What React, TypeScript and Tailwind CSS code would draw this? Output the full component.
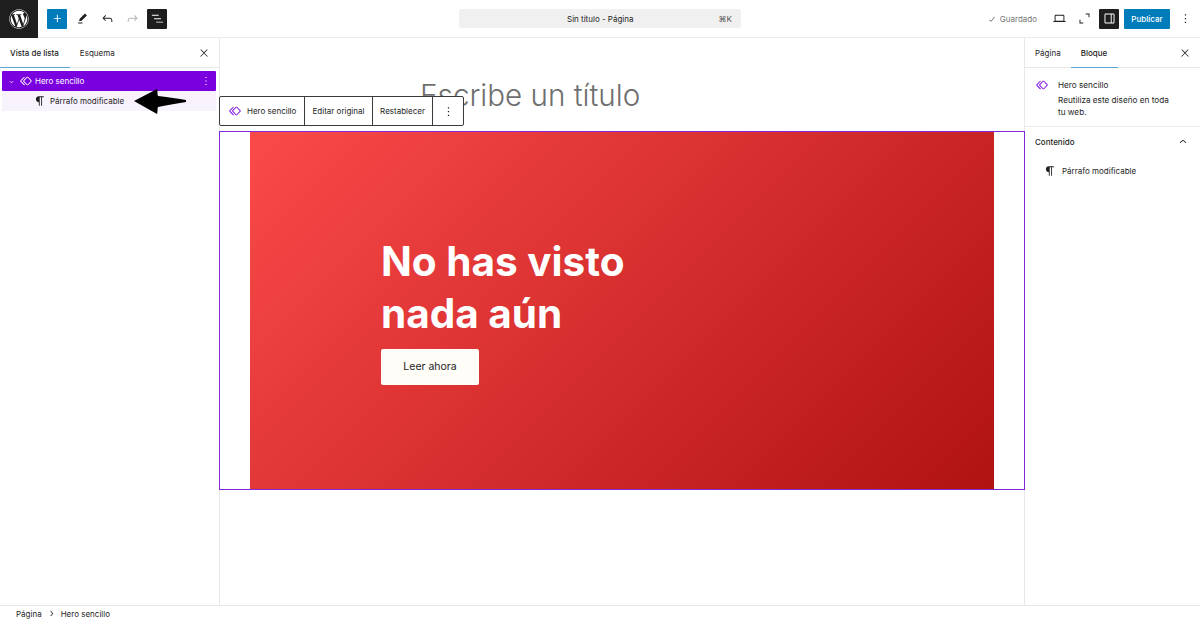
import React from "react";
import { FaWordpress } from "react-icons/fa";

const P = {
  plus: "M11 12.5V17.5H12.5V12.5H17.5V11H12.5V6H11V11H6V12.5H11Z",
  pencil: "m19 7-3-3-8.5 8.5-1 4 4-1L19 7Zm-7 11.5H5V20h7v-1.5Z",
  undo: "M18.3 11.7c-.6-.6-1.4-.9-2.3-.9H6.7l2.9-3.3-1.1-1-4.5 5L8.5 16l1-1-2.7-2.7H16c.5 0 .9.2 1.3.5 1 1 1 3.4 1 4.5v.3h1.5v-.2c0-1.5 0-4.3-1.5-5.7z",
  redo: "M15.6 6.5l-1.1 1 2.9 3.3H8c-.9 0-1.7.3-2.3.9-1.4 1.5-1.4 4.2-1.4 5.6v.2h1.5v-.3c0-1.1 0-3.5 1-4.5.3-.3.7-.5 1.3-.5h9.2L14.5 15l1.1 1.1 4.6-4.6-4.6-5z",
  list: "M3 6h11v1.5H3V6Zm3.5 5.5h11V13h-11v-1.5ZM21 17H10v1.5h11V17Z",
  close: "M13 11.8l6.1-6.3-1-1-6.1 6.2-6.1-6.2-1 1 6.1 6.3-6.5 6.7 1 1 6.5-6.6 6.5 6.6 1-1z",
  more: "M13 19h-2v-2h2v2zm0-6h-2v-2h2v2zm0-6h-2V5h2v2z",
  up: "M6.5 12.4L12 8l5.5 4.4-.9 1.2L12 10l-4.5 3.6-1-1.2z",
  down: "M17.5 11.6L12 16l-5.5-4.4.9-1.2L12 14l4.5-3.6 1 1.2z",
  right: "M10.6 6L9.4 7l4.6 5-4.6 5 1.2 1 5.4-6z",
  para: "m9.99609 14v-.2251l.00391.0001v6.225h1.5v-14.5h2.5v14.5h1.5v-14.5h3v-1.5h-8.50391c-2.76142 0-5 2.23858-5 5 0 2.7614 2.23858 5 5 5z",
  symbol: "M21.3 10.8l-5.6-5.6c-.7-.7-1.8-.7-2.5 0l-5.6 5.6c-.7.7-.7 1.8 0 2.5l5.6 5.6c.3.3.8.5 1.2.5s.9-.2 1.2-.5l5.6-5.6c.8-.7.8-1.9.1-2.5zm-1 1.4l-5.6 5.6c-.1.1-.3.1-.4 0l-5.6-5.6c-.1-.1-.1-.3 0-.4l5.6-5.6s.1-.1.2-.1.1 0 .2.1l5.6 5.6c.1.1.1.3 0 .4zm-16.6-.4L10 5.5l-1-1-6.3 6.3c-.7.7-.7 1.8 0 2.5L9 19.5l1.1-1.1-6.3-6.3c-.2 0-.2-.2-.1-.3z",
  laptop: "M20.5 16h-.7V8c0-1.1-.9-2-2-2H6.2c-1.1 0-2 .9-2 2v8h-.7c-.8 0-1.5.7-1.5 1.5h20c0-.8-.7-1.5-1.5-1.5zM5.7 8c0-.3.2-.5.5-.5h11.6c.3 0 .5.2.5.5v7.6H5.7V8z",
  corners: "M10 18.5H5.5V14H4v6h6v-1.5ZM14 4v1.5h4.5V10H20V4h-6Z",
  drawer: "M18 4H6c-1.1 0-2 .9-2 2v12c0 1.1.9 2 2 2h12c1.1 0 2-.9 2-2V6c0-1.1-.9-2-2-2zm-4 14.5H6c-.3 0-.5-.2-.5-.5V6c0-.3.2-.5.5-.5h8v13zm4.5-.5c0 .3-.2.5-.5.5h-2.5v-13H18c.3 0 .5.2.5.5v12z",
  check: "M16.7 7.1l-6.3 8.5-3.3-2.5-.9 1.2 4.5 3.4L17.9 8z",
};

function I({ d, className }: { d: string; className: string }) {
  return (
    <svg viewBox="0 0 24 24" className={className} fill="currentColor" aria-hidden="true">
      <path d={d} />
    </svg>
  );
}

function Header() {
  return (
    <header className="flex h-[38px] shrink-0 items-center border-b border-[#ececec] bg-white">
      <div className="flex h-[38px] w-[38px] shrink-0 items-center justify-center bg-[#1e1e1e] text-white">
        <FaWordpress className="h-[20px] w-[20px]" />
      </div>
      <div className="ml-[9px] flex h-[20px] w-[20px] items-center justify-center rounded-[1px] bg-[#007cba] text-white">
        <I d={P.plus} className="h-[15px] w-[15px]" />
      </div>
      <I d={P.pencil} className="ml-[7.5px] h-[15px] w-[15px] text-[#1e1e1e]" />
      <I d={P.undo} className="ml-[10.5px] h-[15px] w-[15px] text-[#1e1e1e]" />
      <I d={P.redo} className="ml-[10px] h-[15px] w-[15px] text-[#b4b4b4]" />
      <div className="ml-[7px] flex h-[20px] w-[20px] items-center justify-center rounded-[1px] bg-[#1e1e1e] text-white">
        <I d={P.list} className="h-[15px] w-[15px]" />
      </div>
      <div className="ml-[292px] flex h-[19px] w-[282px] items-center rounded-[2px] bg-[#f0f0f0] pl-[108px] pr-[9px] text-[#1e1e1e]">
        <span className="flex-1 text-[8px]">Sin título - Página</span>
        <span className="text-[8px] text-[#555]">⌘K</span>
      </div>
      <div className="ml-auto flex items-center">
        <I d={P.check} className="h-[12px] w-[12px] text-[#757575]" />
        <span className="ml-[2px] text-[8px] text-[#757575]">Guardado</span>
        <I d={P.laptop} className="ml-[15px] h-[15px] w-[15px] text-[#1e1e1e]" />
        <I d={P.corners} className="ml-[10px] h-[15px] w-[15px] text-[#1e1e1e]" />
        <div className="ml-[7px] flex h-[20px] w-[20px] items-center justify-center rounded-[1px] bg-[#1e1e1e] text-white">
          <I d={P.drawer} className="h-[15px] w-[15px]" />
        </div>
        <div className="ml-[5px] flex h-[20px] w-[46px] items-center justify-center rounded-[1px] bg-[#007cba] text-[8px] font-medium text-white">
          Publicar
        </div>
        <I d={P.more} className="ml-[7.5px] mr-[7.5px] h-[15px] w-[15px] text-[#1e1e1e]" />
      </div>
    </header>
  );
}

function Tabs({ tabs, active, pr }: { tabs: string[]; active: number; pr: string }) {
  return (
    <div className={`flex h-[30px] shrink-0 items-stretch border-b border-[#e8e8e8] ${pr}`}>
      {tabs.map((t, i) => (
        <div
          key={t}
          className={
            i === active
              ? "mb-[-1px] flex min-w-[47px] items-center justify-start border-b-[1.5px] border-[#5aa5d1] pl-[10px] pr-[11px] text-[8px] font-medium text-[#1e1e1e]"
              : "flex items-center px-[10px] text-[8px] text-[#1e1e1e]"
          }
        >
          {t}
        </div>
      ))}
      <div className="ml-auto flex items-center">
        <I d={P.close} className="h-[12px] w-[12px] text-[#1e1e1e]" />
      </div>
    </div>
  );
}

function LeftPanel() {
  return (
    <aside className="relative flex w-[219px] shrink-0 flex-col bg-white">
      <Tabs tabs={["Vista de lista", "Esquema"]} active={0} pr="pr-[9px]" />
      <div className="flex flex-col px-[2px] pt-[3px]">
        <div className="flex h-[20px] w-[214px] items-center rounded-[1px] bg-[#7a00df] pl-[5px] pr-[3px] text-white">
          <I d={P.down} className="h-[9px] w-[9px]" />
          <I d={P.symbol} className="ml-[3px] h-[14px] w-[14px]" />
          <span className="ml-[2px] text-[8px]">Hero sencillo</span>
          <I d={P.more} className="ml-auto h-[14px] w-[14px]" />
        </div>
        <div className="flex h-[20px] w-[214px] items-center bg-[#f8f2fd] pl-[31px] text-[#1e1e1e]">
          <I d={P.para} className="h-[14px] w-[14px]" />
          <span className="ml-[3px] text-[8px]">Párrafo modificable</span>
        </div>
      </div>
      <svg viewBox="0 0 52 25" className="absolute left-[134px] top-[51px] h-[25px] w-[52px]" aria-hidden="true">
        <path
          d="M0 12 L23 0 C24 3 23 5 24 7 C32 8 42 9 52 11 L52 13 C42 15 32 16 24 18 C23 20 24 23 23 25 Z"
          fill="#000"
        />
      </svg>
    </aside>
  );
}

function RightPanel() {
  return (
    <aside className="flex w-[175px] shrink-0 flex-col bg-white">
      <Tabs tabs={["Página", "Bloque"]} active={1} pr="pr-[9px]" />
      <div className="flex h-[59px] border-b border-[#ececec] pb-[8px] pl-[10px] pt-[10px]">
        <I d={P.symbol} className="h-[14px] w-[14px] shrink-0 text-[#7a00df]" />
        <div className="ml-[9px] w-[118px] text-[8.2px] text-[#1e1e1e]">
          <div className="leading-[14px]">Hero sencillo</div>
          <div className="mt-[2px] leading-[12px]">
            Reutiliza este diseño en toda
            <br />
            tu web.
          </div>
        </div>
      </div>
      <div className="flex items-center justify-between pl-[10px] pr-[10px] pt-[8px]">
        <span className="text-[8px] font-medium text-[#1e1e1e]">Contenido</span>
        <I d={P.up} className="h-[14px] w-[14px] text-[#1e1e1e]" />
      </div>
      <div className="flex items-center pl-[18px] pt-[15px]">
        <I d={P.para} className="h-[14px] w-[14px] text-[#1e1e1e]" />
        <span className="ml-[5px] text-[8px] text-[#1e1e1e]">Párrafo modificable</span>
      </div>
    </aside>
  );
}

function Canvas() {
  return (
    <main className="relative flex w-[806px] shrink-0 flex-col border-x border-[#e8e8e8] bg-white">
      <div className="pl-[200px] pt-[37px] text-[29.6px] font-light leading-[40px] text-[#6f6f6f]">
        Escribe un título
      </div>
      <div className="mx-[-1px] mt-[16px] h-[359px] border border-[#8228d4] bg-white px-[30px]">
        <div className="flex h-full flex-col justify-center bg-[linear-gradient(135deg,#fb4a4a_0%,#b01212_100%)] pl-[131px]">
          <div className="text-[40.5px] font-bold leading-[52px] text-white">
            No has visto
            <br />
            nada aún
          </div>
          <div className="mt-[9px] flex h-[36px] w-[98px] items-center justify-center rounded-[2px] bg-[#fffdf8] text-[10.5px] text-[#1e1e1e]">
            Leer ahora
          </div>
        </div>
      </div>
      <div className="absolute left-[-1px] top-[58px] flex h-[30px] items-stretch rounded-[2px] border border-[#3a3a3a] bg-white text-[8px] text-[#1e1e1e]">
        <div className="flex w-[84px] items-center pl-[8px]">
          <I d={P.symbol} className="h-[14px] w-[14px] text-[#7a00df]" />
          <span className="ml-[5px]">Hero sencillo</span>
        </div>
        <div className="flex w-[68px] items-center justify-center border-l border-[#3a3a3a]">Editar original</div>
        <div className="flex w-[60px] items-center justify-center border-l border-[#3a3a3a]">Restablecer</div>
        <div className="flex w-[31px] items-center justify-center border-l border-[#3a3a3a]">
          <I d={P.more} className="h-[15px] w-[15px]" />
        </div>
      </div>
    </main>
  );
}

export default function App() {
  return (
    <div className="flex h-[621px] w-[1200px] flex-col overflow-hidden bg-white font-['Inter','Liberation_Sans',sans-serif]">
      <Header />
      <div className="flex min-h-0 flex-1">
        <LeftPanel />
        <Canvas />
        <RightPanel />
      </div>
      <footer className="flex h-[16px] shrink-0 items-center border-t border-[#e8e8e8] bg-white pl-[16px] text-[8px] text-[#1e1e1e]">
        <span>Página</span>
        <I d={P.right} className="mx-[4px] h-[11px] w-[11px]" />
        <span>Hero sencillo</span>
      </footer>
    </div>
  );
}
